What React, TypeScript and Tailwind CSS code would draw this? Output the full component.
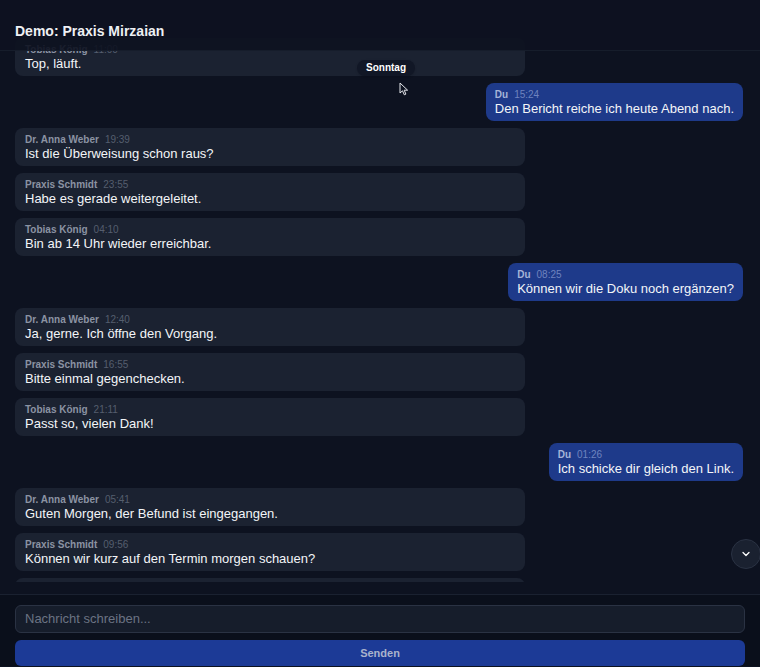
import React from "react";

type Msg = { name: string; time: string; text: string; own?: boolean };

const msgs: Msg[] = [
  { name: "Tobias König", time: "11:00", text: "Top, läuft." },
  { name: "Du", time: "15:24", text: "Den Bericht reiche ich heute Abend nach.", own: true },
  { name: "Dr. Anna Weber", time: "19:39", text: "Ist die Überweisung schon raus?" },
  { name: "Praxis Schmidt", time: "23:55", text: "Habe es gerade weitergeleitet." },
  { name: "Tobias König", time: "04:10", text: "Bin ab 14 Uhr wieder erreichbar." },
  { name: "Du", time: "08:25", text: "Können wir die Doku noch ergänzen?", own: true },
  { name: "Dr. Anna Weber", time: "12:40", text: "Ja, gerne. Ich öffne den Vorgang." },
  { name: "Praxis Schmidt", time: "16:55", text: "Bitte einmal gegenchecken." },
  { name: "Tobias König", time: "21:11", text: "Passt so, vielen Dank!" },
  { name: "Du", time: "01:26", text: "Ich schicke dir gleich den Link.", own: true },
  { name: "Dr. Anna Weber", time: "05:41", text: "Guten Morgen, der Befund ist eingegangen." },
  { name: "Praxis Schmidt", time: "09:56", text: "Können wir kurz auf den Termin morgen schauen?" },
];

function Bubble({ m }: { m: Msg }) {
  return (
    <div className={m.own ? "flex justify-end" : "flex justify-start"}>
      <div
        className={
          m.own
            ? "h-[38px] rounded-lg bg-[#1e3a8a] pl-[9px] pr-[9px] pt-[6px]"
            : "h-[38px] w-[70%] rounded-lg bg-[#1b2231] pl-[10px] pr-[9px] pt-[6px]"
        }
      >
        <div className="flex items-baseline gap-[6px] text-[10px] leading-[11px]">
          <span className={m.own ? "font-bold text-[#a5b4d8]" : "font-bold text-[#8b93a3]"}>{m.name}</span>
          <span className={m.own ? "text-[#6f83bf]" : "text-[#555e6e]"}>{m.time}</span>
        </div>
        <div className="text-[13px] leading-[17px] text-[#f3f5f8] whitespace-nowrap">{m.text}</div>
      </div>
    </div>
  );
}

export default function App() {
  return (
    <div
      className="relative flex h-[667px] w-[760px] flex-col overflow-hidden bg-[#0d1220]"
      style={{ fontFamily: '"Liberation Sans", Arial, sans-serif' }}
    >
      <div className="relative h-[582px] shrink-0 overflow-hidden">
        <div className="flex flex-col gap-[7px] pl-[15px] pr-[17px] pt-[38px]">
          {msgs.map((m, i) => (
            <Bubble key={i} m={m} />
          ))}
          <div className="h-[38px] w-[70%] rounded-lg bg-[#1b2231]" />
        </div>

        {/* day separator */}
        <div className="absolute left-[357px] top-[60px] rounded-full bg-[#111726] px-[9px] py-[2px] text-[10px] font-bold leading-[12px] text-white shadow">
          Sonntag
        </div>

        {/* mouse cursor */}
        <svg className="absolute left-[399px] top-[82px]" width="10" height="14" viewBox="0 0 10 14">
          <path d="M1 1 L1 11 L3.5 8.8 L5.3 12.8 L6.9 12.1 L5.2 8.2 L8.6 8.2 Z" fill="#0d1220" stroke="#e5e7eb" strokeWidth="1" strokeLinejoin="round" />
        </svg>

        {/* scroll down button */}
        <div className="absolute left-[731px] top-[539px] flex h-[30px] w-[30px] items-center justify-center rounded-full border border-[#2a3243] bg-[#1a2130]">
          <svg width="12" height="12" viewBox="0 0 24 24" fill="none" stroke="#ffffff" strokeWidth="2.5" strokeLinecap="round" strokeLinejoin="round">
            <path d="M6 9l6 6 6-6" />
          </svg>
        </div>
      </div>

      {/* header overlay */}
      <div className="absolute left-0 right-0 top-0 flex h-[51px] items-center border-b border-[#161d2b] bg-[#0d1220]/90 px-[15px] pt-[12px]">
        <span className="text-[14px] font-bold text-[#eef0f4]">Demo: Praxis Mirzaian</span>
      </div>

      <div className="h-[12px] shrink-0" />

      <div className="flex shrink-0 flex-col gap-[7px] border-t border-[#1a2130] bg-[#0a0f1b] px-[15px] pt-[10px]">
        <div className="flex h-[28px] items-center rounded-md border border-[#2a3243] bg-[#161d2b] px-[9px] text-[13px] text-[#6b7383]">
          Nachricht schreiben...
        </div>
        <div className="flex h-[26px] items-center justify-center rounded-md bg-[#1c3a96] text-[11px] font-bold text-[#a9b3cc]">
          Senden
        </div>
      </div>
    </div>
  );
}
